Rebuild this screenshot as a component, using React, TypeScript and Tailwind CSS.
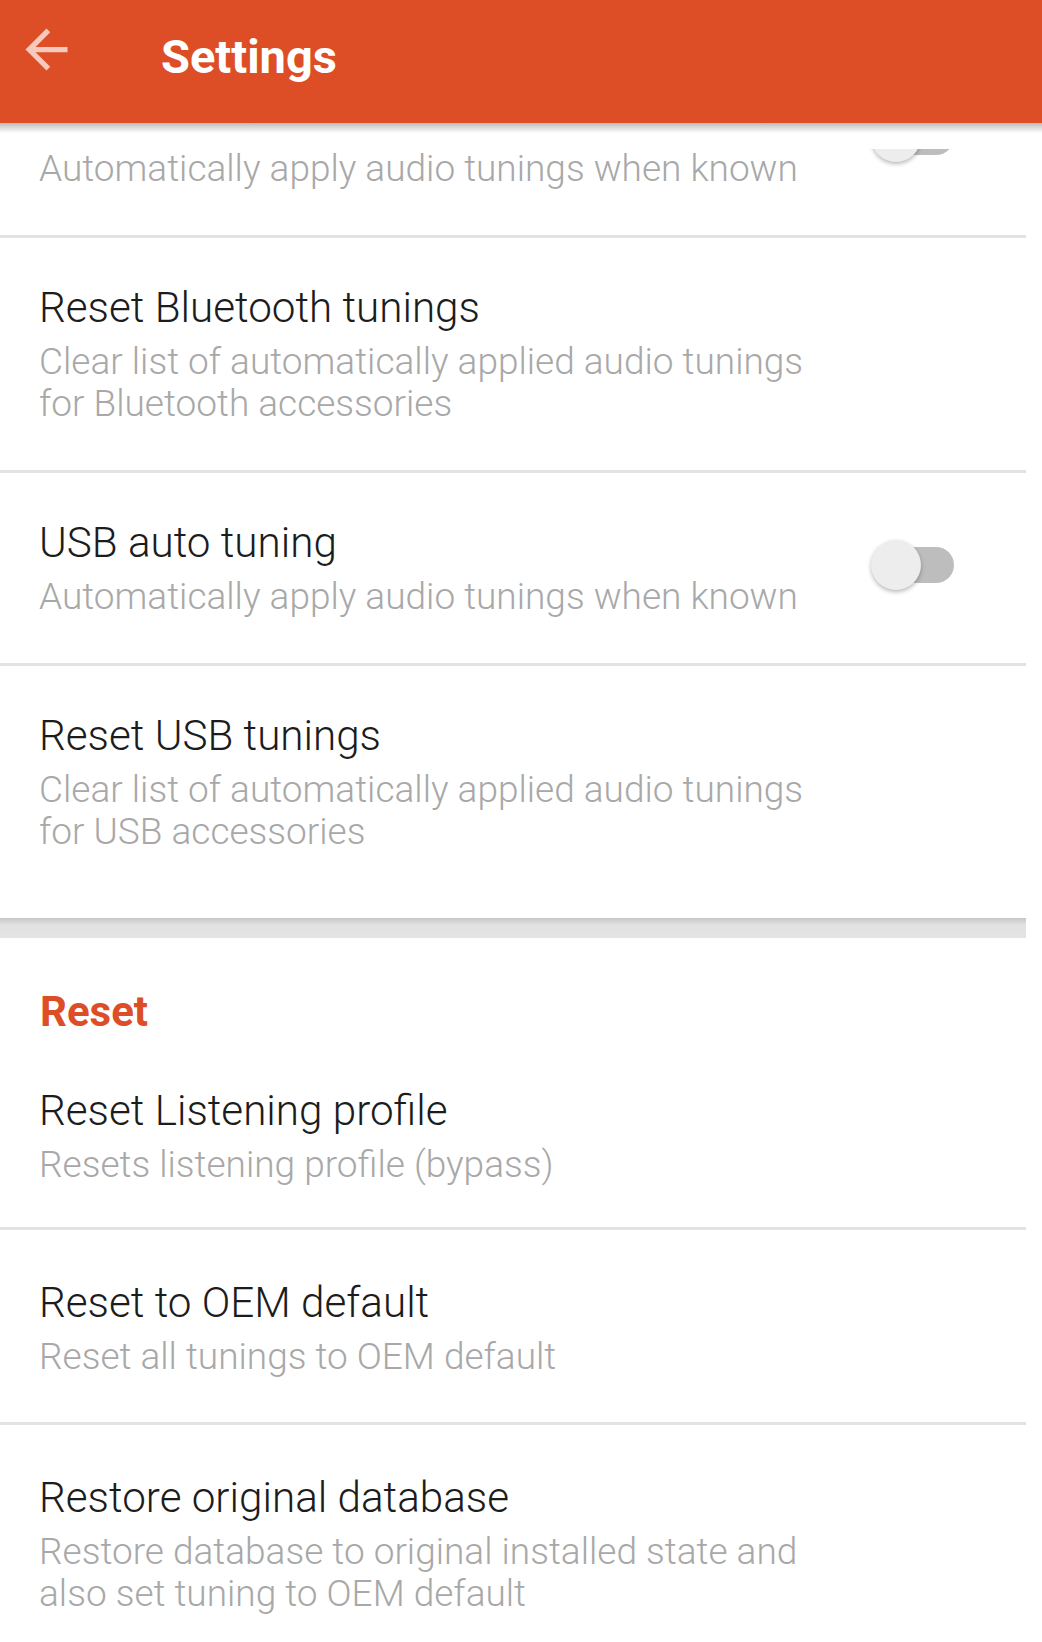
import React from "react";

type RowProps = {
  title: string;
  lines: string[];
  toggle?: boolean;
  pt?: string;
  pb?: string;
};

function Toggle() {
  return (
    <div className="relative w-[86px] h-[50px] mr-[72px] mb-[6px] shrink-0">
      <div className="absolute left-[4px] right-0 top-[7px] h-[36px] rounded-full bg-[#bdbdbd]" />
      <div className="absolute left-[3px] top-0 w-[50px] h-[50px] rounded-full bg-[#ededed] shadow-[0_2px_4px_rgba(0,0,0,0.28)]" />
    </div>
  );
}

function Row({ title, lines, toggle, pt = "pt-[46px]", pb = "pb-[45px]" }: RowProps) {
  return (
    <div className="flex items-center">
      <div className={`flex-1 pl-[39px] ${pt} ${pb}`}>
        <div className="text-[42.2px] leading-[48px] font-light text-[#1c1c1c] whitespace-nowrap">{title}</div>
        <div className="mt-[9px] text-[37px] leading-[42px] font-light text-[#a8a8a8]">
          {lines.map((l) => (
            <div key={l} className="whitespace-nowrap">
              {l}
            </div>
          ))}
        </div>
      </div>
      {toggle && <Toggle />}
    </div>
  );
}

function Divider() {
  return <div className="h-[3px] bg-[#e3e3e3]" />;
}

export default function App() {
  return (
    <div className="w-[1042px] h-[1642px] bg-white relative overflow-hidden font-['Roboto',sans-serif]">
      <header className="h-[123px] bg-[#dd4e26] flex items-start relative z-20">
        <svg viewBox="0 0 24 24" className="ml-[15px] mt-[18px] w-[63px] h-[63px]">
          <path
            d="M20 11H7.83l5.59-5.59L12 4l-8 8 8 8 1.41-1.41L7.83 13H20v-2z"
            fill="#ffffff"
            fillOpacity={0.7}
          />
        </svg>
        <h1 className="ml-[83px] mt-[33px] text-[47px] leading-[48px] font-bold text-white">Settings</h1>
      </header>

      <div className="relative h-[1519px] overflow-hidden">
        <div className="absolute inset-x-0 top-0 h-[26px] z-10 bg-[linear-gradient(to_bottom,#bcbcbc,#ffffff_10px,#ffffff)]" />
        <div className="w-[1026px] -mt-[78px]">
          <Row title="Bluetooth auto tuning" lines={["Automatically apply audio tunings when known"]} toggle />
          <Divider />
          <Row
            title="Reset Bluetooth tunings"
            lines={["Clear list of automatically applied audio tunings", "for Bluetooth accessories"]}
          />
          <Divider />
          <Row title="USB auto tuning" lines={["Automatically apply audio tunings when known"]} toggle />
          <Divider />
          <Row
            title="Reset USB tunings"
            lines={["Clear list of automatically applied audio tunings", "for USB accessories"]}
            pb="pb-[65px]"
          />
          <div className="h-[20px] bg-[linear-gradient(to_bottom,#c6c6c6,#e2e2e2_35%,#e4e4e4)]" />

          <div className="pl-[40px] pt-[50px] text-[42px] leading-[48px] font-bold text-[#dd4e26]">Reset</div>
          <Row
            title="Reset Listening profile"
            lines={["Resets listening profile (bypass)"]}
            pt="pt-[51px]"
            pb="pb-[41px]"
          />
          <Divider />
          <Row
            title="Reset to OEM default"
            lines={["Reset all tunings to OEM default"]}
            pt="pt-[49px]"
            pb="pb-[44px]"
          />
          <Divider />
          <Row
            title="Restore original database"
            lines={["Restore database to original installed state and", "also set tuning to OEM default"]}
            pt="pt-[49px]"
            pb="pb-[45px]"
          />
        </div>
      </div>
    </div>
  );
}
